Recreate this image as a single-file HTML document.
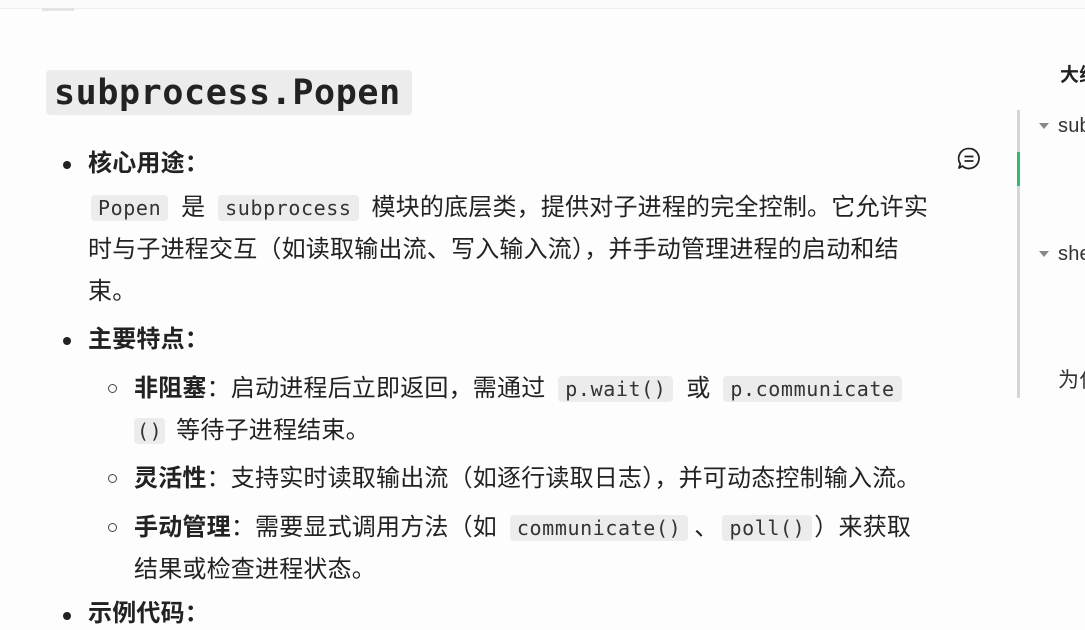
<!DOCTYPE html>
<html><head><meta charset="utf-8"><style>
body{margin:0;width:1085px;height:619px;overflow:hidden;background:#fdfdfd;font-family:"Liberation Sans","Noto Sans CJK SC",sans-serif;color:#222;position:relative}
.l{position:absolute;font-size:24px;white-space:nowrap;line-height:32px;letter-spacing:0.2px}
code{font-family:"DejaVu Sans Mono","Liberation Mono",monospace;background:#ececec;border-radius:4px;padding:1px 7px;font-size:20px;color:#333;margin:0 6px;letter-spacing:0.6px}
.b{font-weight:bold}
.dot{position:absolute;width:8px;height:8px;border-radius:50%;background:#222}
.circ{position:absolute;width:7px;height:7px;border-radius:50%;border:1.3px solid #444}
</style></head><body>
<div style="position:absolute;left:0;top:0;width:1085px;height:8px;border-bottom:1px solid #eee;background:#fafafa"></div>
<div style="position:absolute;left:42px;top:8px;width:32px;height:3px;background:#e4e4e4"></div>
<div style="position:absolute;left:46px;top:70px;width:366px;height:45px;background:#ececec;border-radius:4px"></div>
<div class="l" style="left:54px;top:72px;font-family:'DejaVu Sans Mono',monospace;font-weight:bold;font-size:35px;line-height:42px;color:#222;letter-spacing:0.6px">subprocess.Popen</div>

<div class="dot" style="left:63px;top:161px"></div>
<div class="l b" style="left:88px;top:148px">核心用途：</div>
<div class="l" style="left:88px;top:192px"><code style="margin-left:3px">Popen</code> 是 <code>subprocess</code> 模块的底层类，提供对子进程的完全控制。它允许实</div>
<div class="l" style="left:88px;top:234px">时与子进程交互（如读取输出流、写入输入流），并手动管理进程的启动和结</div>
<div class="l" style="left:88px;top:276px">束。</div>

<div class="dot" style="left:63px;top:337px"></div>
<div class="l b" style="left:88px;top:324px">主要特点：</div>
<div class="circ" style="left:108px;top:384px"></div>
<div class="l" style="left:134px;top:373px"><span class="b">非阻塞</span>：启动进程后立即返回，需通过 <code>p.wait()</code> 或 <code>p.communicate</code></div>
<div class="l" style="left:134px;top:415px"><code style="padding:1px 3px;margin:0 4px 0 0">()</code> 等待子进程结束。</div>
<div class="circ" style="left:108px;top:474px"></div>
<div class="l" style="left:134px;top:463px"><span class="b">灵活性</span>：支持实时读取输出流（如逐行读取日志），并可动态控制输入流。</div>
<div class="circ" style="left:108px;top:523px"></div>
<div class="l" style="left:134px;top:512px"><span class="b">手动管理</span>：需要显式调用方法（如 <code>communicate()</code>、<code style="margin-left:4px;margin-right:2px">poll()</code>）来获取</div>
<div class="l" style="left:134px;top:554px">结果或检查进程状态。</div>
<div class="dot" style="left:63px;top:612px"></div>
<div class="l b" style="left:88px;top:598px">示例代码：</div>

<svg style="position:absolute;left:956px;top:146px" width="26" height="26" viewBox="0 0 26 26"><path d="M13 2.5a10 10 0 1 1-6.5 17.6L3 22l1.3-4A10 10 0 0 1 13 2.5z" fill="none" stroke="#222" stroke-width="1.8" stroke-linejoin="round"/><path d="M8.5 10.5h9M8.5 15h9" stroke="#222" stroke-width="1.8"/></svg>

<div style="position:absolute;left:1017px;top:110px;width:3px;height:288px;background:#d6d6d6"></div>
<div style="position:absolute;left:1017px;top:152px;width:3px;height:34px;background:#2dbd6e"></div>
<div class="l b" style="left:1060px;top:60px;font-size:19px">大纲</div>
<svg style="position:absolute;left:1039px;top:123px" width="10" height="8"><path d="M0 0h10L5 6z" fill="#888"/></svg>
<div class="l" style="left:1058px;top:110px;font-size:20px;color:#333">subprocess</div>
<svg style="position:absolute;left:1039px;top:251px" width="10" height="8"><path d="M0 0h10L5 6z" fill="#888"/></svg>
<div class="l" style="left:1058px;top:238px;font-size:20px;color:#333">shell</div>
<div class="l" style="left:1058px;top:365px;font-size:21px;color:#333">为什么</div>
</body></html>
